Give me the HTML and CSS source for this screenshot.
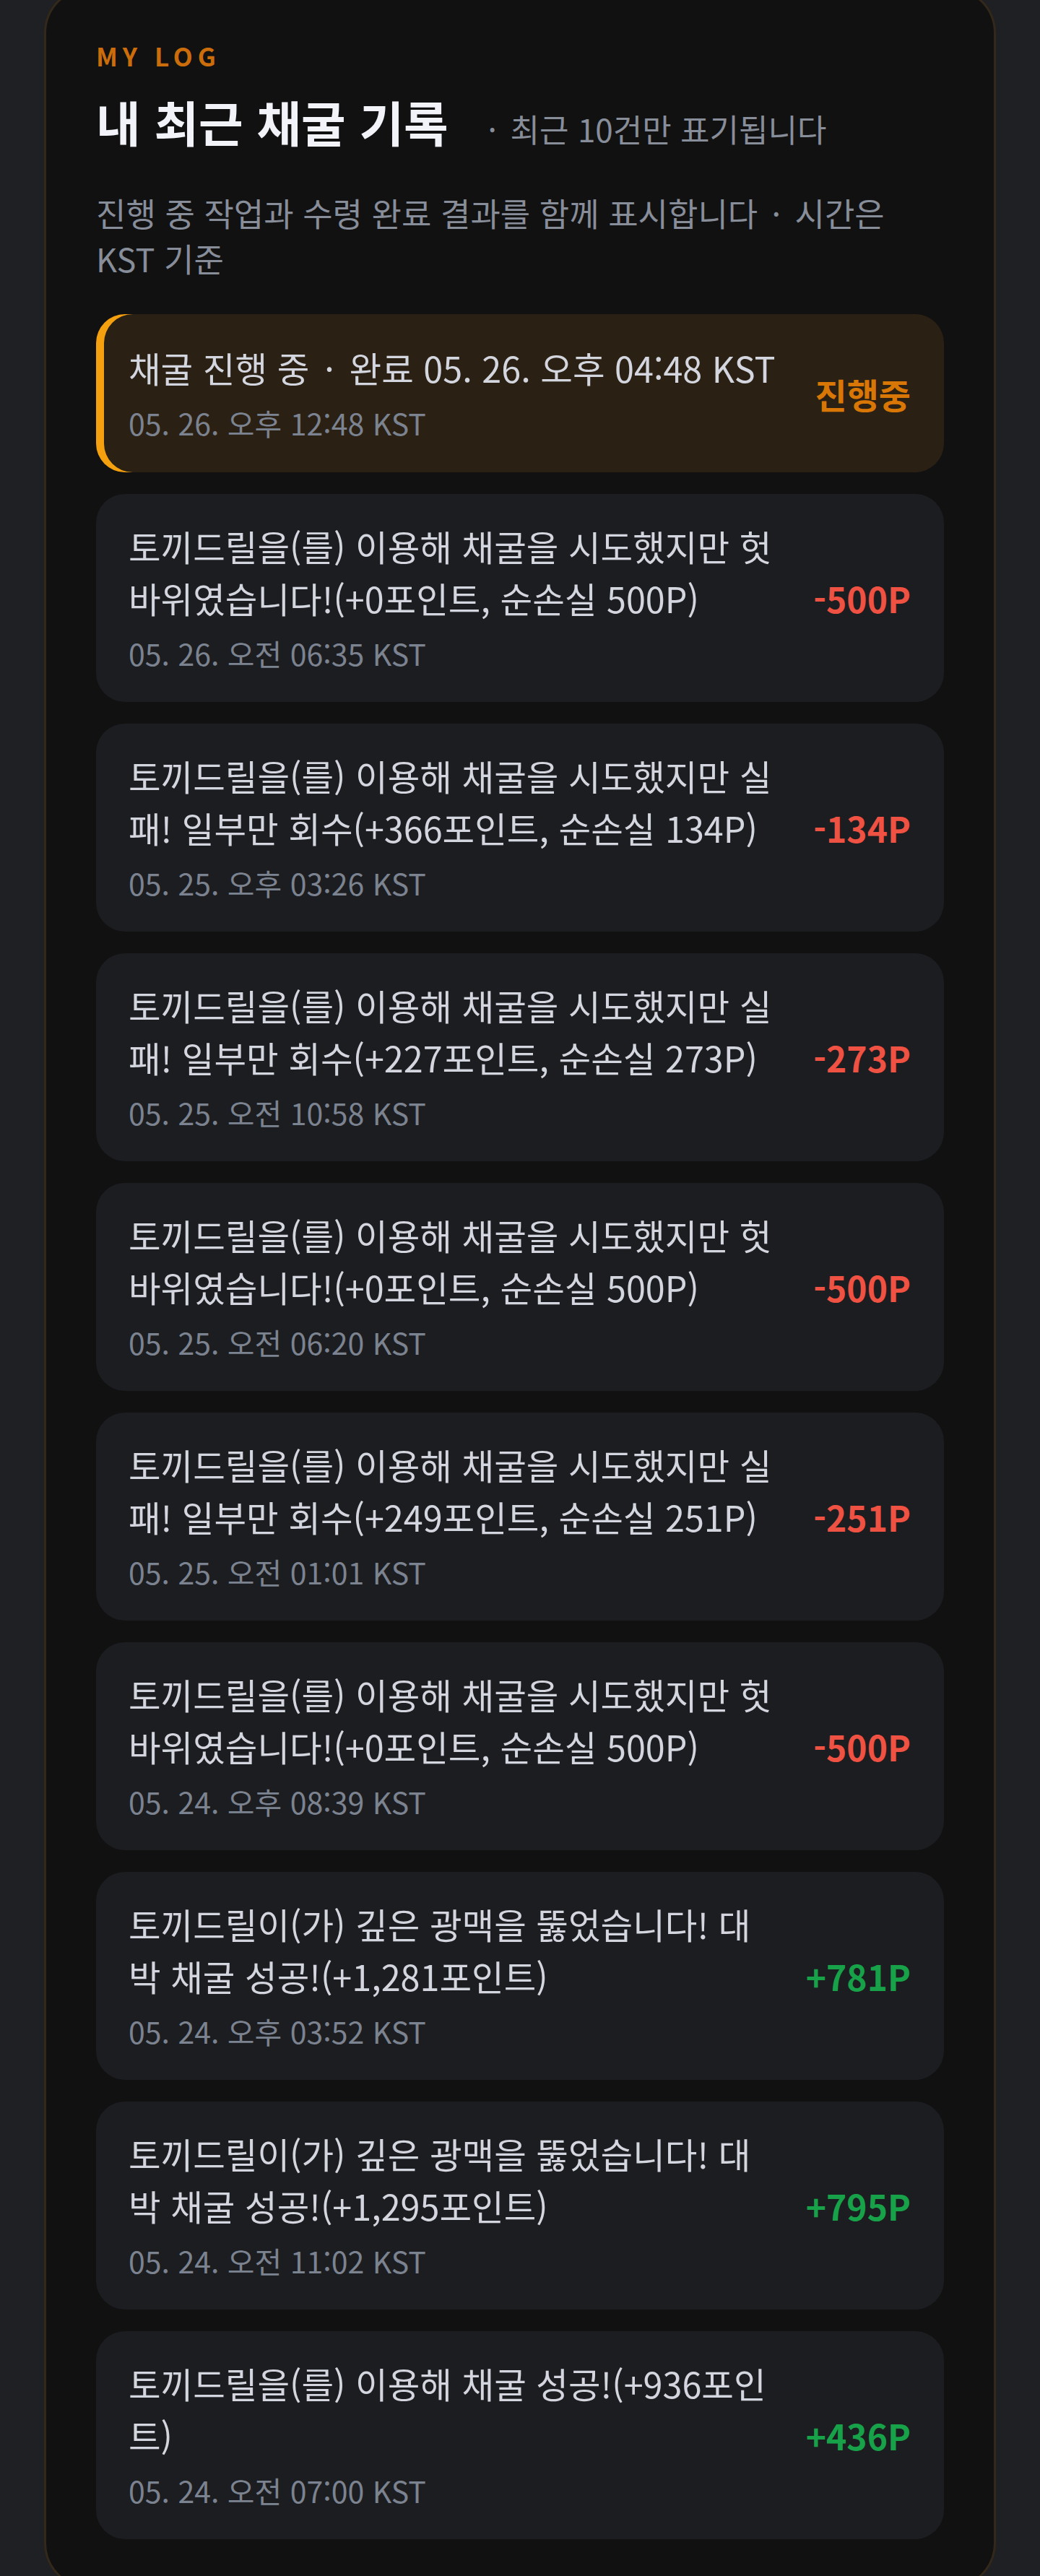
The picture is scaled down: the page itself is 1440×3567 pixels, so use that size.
FILE: index.html
```html
<!DOCTYPE html>
<html lang="ko">
<head>
<meta charset="utf-8">
<title>내 최근 채굴 기록</title>
<link rel="stylesheet" href="styles.css">
</head>
<body>
<div class="page">
  <section class="panel">
    <p class="eyebrow">MY LOG</p>
    <div class="title-row">
      <h1 class="title">내 최근 채굴 기록</h1>
      <span class="hint"><span class="sep">·</span> 최근 10건만 표기됩니다</span>
    </div>
    <p class="desc">진행 중 작업과 수령 완료 결과를 함께 표시합니다 <span class="sep">·</span> 시간은 <span class="nowrap">KST 기준</span></p>

    <ul class="log-list">
      <li class="log-item pending">
        <div class="log-body">
          <p class="log-msg">채굴 진행 중 <span class="sep">·</span> 완료 05. 26. 오후 04:48 KST</p>
          <p class="log-time">05. 26. 오후 12:48 KST</p>
        </div>
        <strong class="log-status">진행중</strong>
      </li>
      <li class="log-item">
        <div class="log-body">
          <p class="log-msg">토끼드릴을(를) 이용해 채굴을 시도했지만 헛바위였습니다!(+0포인트, 순손실 500P)</p>
          <p class="log-time">05. 26. 오전 06:35 KST</p>
        </div>
        <strong class="log-amt loss">-500P</strong>
      </li>
      <li class="log-item">
        <div class="log-body">
          <p class="log-msg">토끼드릴을(를) 이용해 채굴을 시도했지만 실패! 일부만 회수(+366포인트, 순손실 134P)</p>
          <p class="log-time">05. 25. 오후 03:26 KST</p>
        </div>
        <strong class="log-amt loss">-134P</strong>
      </li>
      <li class="log-item">
        <div class="log-body">
          <p class="log-msg">토끼드릴을(를) 이용해 채굴을 시도했지만 실패! 일부만 회수(+227포인트, 순손실 273P)</p>
          <p class="log-time">05. 25. 오전 10:58 KST</p>
        </div>
        <strong class="log-amt loss">-273P</strong>
      </li>
      <li class="log-item">
        <div class="log-body">
          <p class="log-msg">토끼드릴을(를) 이용해 채굴을 시도했지만 헛바위였습니다!(+0포인트, 순손실 500P)</p>
          <p class="log-time">05. 25. 오전 06:20 KST</p>
        </div>
        <strong class="log-amt loss">-500P</strong>
      </li>
      <li class="log-item">
        <div class="log-body">
          <p class="log-msg">토끼드릴을(를) 이용해 채굴을 시도했지만 실패! 일부만 회수(+249포인트, 순손실 251P)</p>
          <p class="log-time">05. 25. 오전 01:01 KST</p>
        </div>
        <strong class="log-amt loss">-251P</strong>
      </li>
      <li class="log-item">
        <div class="log-body">
          <p class="log-msg">토끼드릴을(를) 이용해 채굴을 시도했지만 헛바위였습니다!(+0포인트, 순손실 500P)</p>
          <p class="log-time">05. 24. 오후 08:39 KST</p>
        </div>
        <strong class="log-amt loss">-500P</strong>
      </li>
      <li class="log-item">
        <div class="log-body">
          <p class="log-msg">토끼드릴이(가) 깊은 광맥을 뚫었습니다! 대박 채굴 성공!(+1,281포인트)</p>
          <p class="log-time">05. 24. 오후 03:52 KST</p>
        </div>
        <strong class="log-amt gain">+781P</strong>
      </li>
      <li class="log-item">
        <div class="log-body">
          <p class="log-msg">토끼드릴이(가) 깊은 광맥을 뚫었습니다! 대박 채굴 성공!(+1,295포인트)</p>
          <p class="log-time">05. 24. 오전 11:02 KST</p>
        </div>
        <strong class="log-amt gain">+795P</strong>
      </li>
      <li class="log-item">
        <div class="log-body">
          <p class="log-msg">토끼드릴을(를) 이용해 채굴 성공!(+936포인트)</p>
          <p class="log-time">05. 24. 오전 07:00 KST</p>
        </div>
        <strong class="log-amt gain">+436P</strong>
      </li>
    </ul>
  </section>
</div>
</body>
</html>
```

FILE: styles.css
```css
* {
  box-sizing: border-box;
}

html,
body {
  margin: 0;
  padding: 0;
  background: #1f2023;
}

body {
  font-family: "Noto Sans CJK KR", "Noto Sans", sans-serif;
  color: #d1d5db;
}

.page {
  height: 3567px;
  overflow: hidden;
}

.panel {
  margin: -18px 61px 0;
  padding: 71px 69px 66px;
  background: #111112;
  border: 3px solid #33281a;
  border-radius: 64px;
}

.sep {
  display: inline-block;
  width: 0.58em;
  text-align: center;
}

.nowrap {
  white-space: nowrap;
}

.eyebrow {
  margin: 0;
  font-size: 35px;
  line-height: 42px;
  font-weight: 700;
  letter-spacing: 0.2em;
  color: #cc6d0b;
}

.title-row {
  display: flex;
  align-items: baseline;
  gap: 48px;
  margin-top: 26px;
}

.title {
  margin: 0;
  font-size: 67px;
  line-height: 88px;
  font-weight: 700;
  color: #f1f3f9;
}

.hint {
  font-size: 44px;
  line-height: 58px;
  color: #878d99;
}

.desc {
  margin: 51px 0 0;
  font-size: 45px;
  line-height: 63px;
  color: #878d99;
}

.log-list {
  list-style: none;
  margin: 46px 0 0;
  padding: 0;
  display: flex;
  flex-direction: column;
  gap: 30px;
}

.log-item {
  display: flex;
  align-items: center;
  gap: 50px;
  padding: 36px 46px 36px 45px;
  border-radius: 40px;
  background: #1c1d20;
}

.log-item.pending {
  padding-top: 38px;
  padding-bottom: 37px;
  background: #2a2013;
  box-shadow: inset 11px 0 0 #f5a00f;
}

.log-body {
  flex: 1;
  min-width: 0;
}

.log-msg {
  margin: 0;
  font-size: 48.5px;
  line-height: 72px;
  color: #d3d6de;
}

.log-time {
  margin: 9px 0 0;
  font-size: 41px;
  line-height: 63px;
  color: #7c8390;
}

.log-amt {
  flex-shrink: 0;
  font-size: 48px;
  font-weight: 700;
  line-height: 58px;
}

.log-amt.loss {
  color: #ef5142;
}

.log-amt.gain {
  color: #17a24a;
}

.log-status {
  flex-shrink: 0;
  font-size: 48px;
  font-weight: 700;
  line-height: 58px;
  color: #d97706;
}
```
